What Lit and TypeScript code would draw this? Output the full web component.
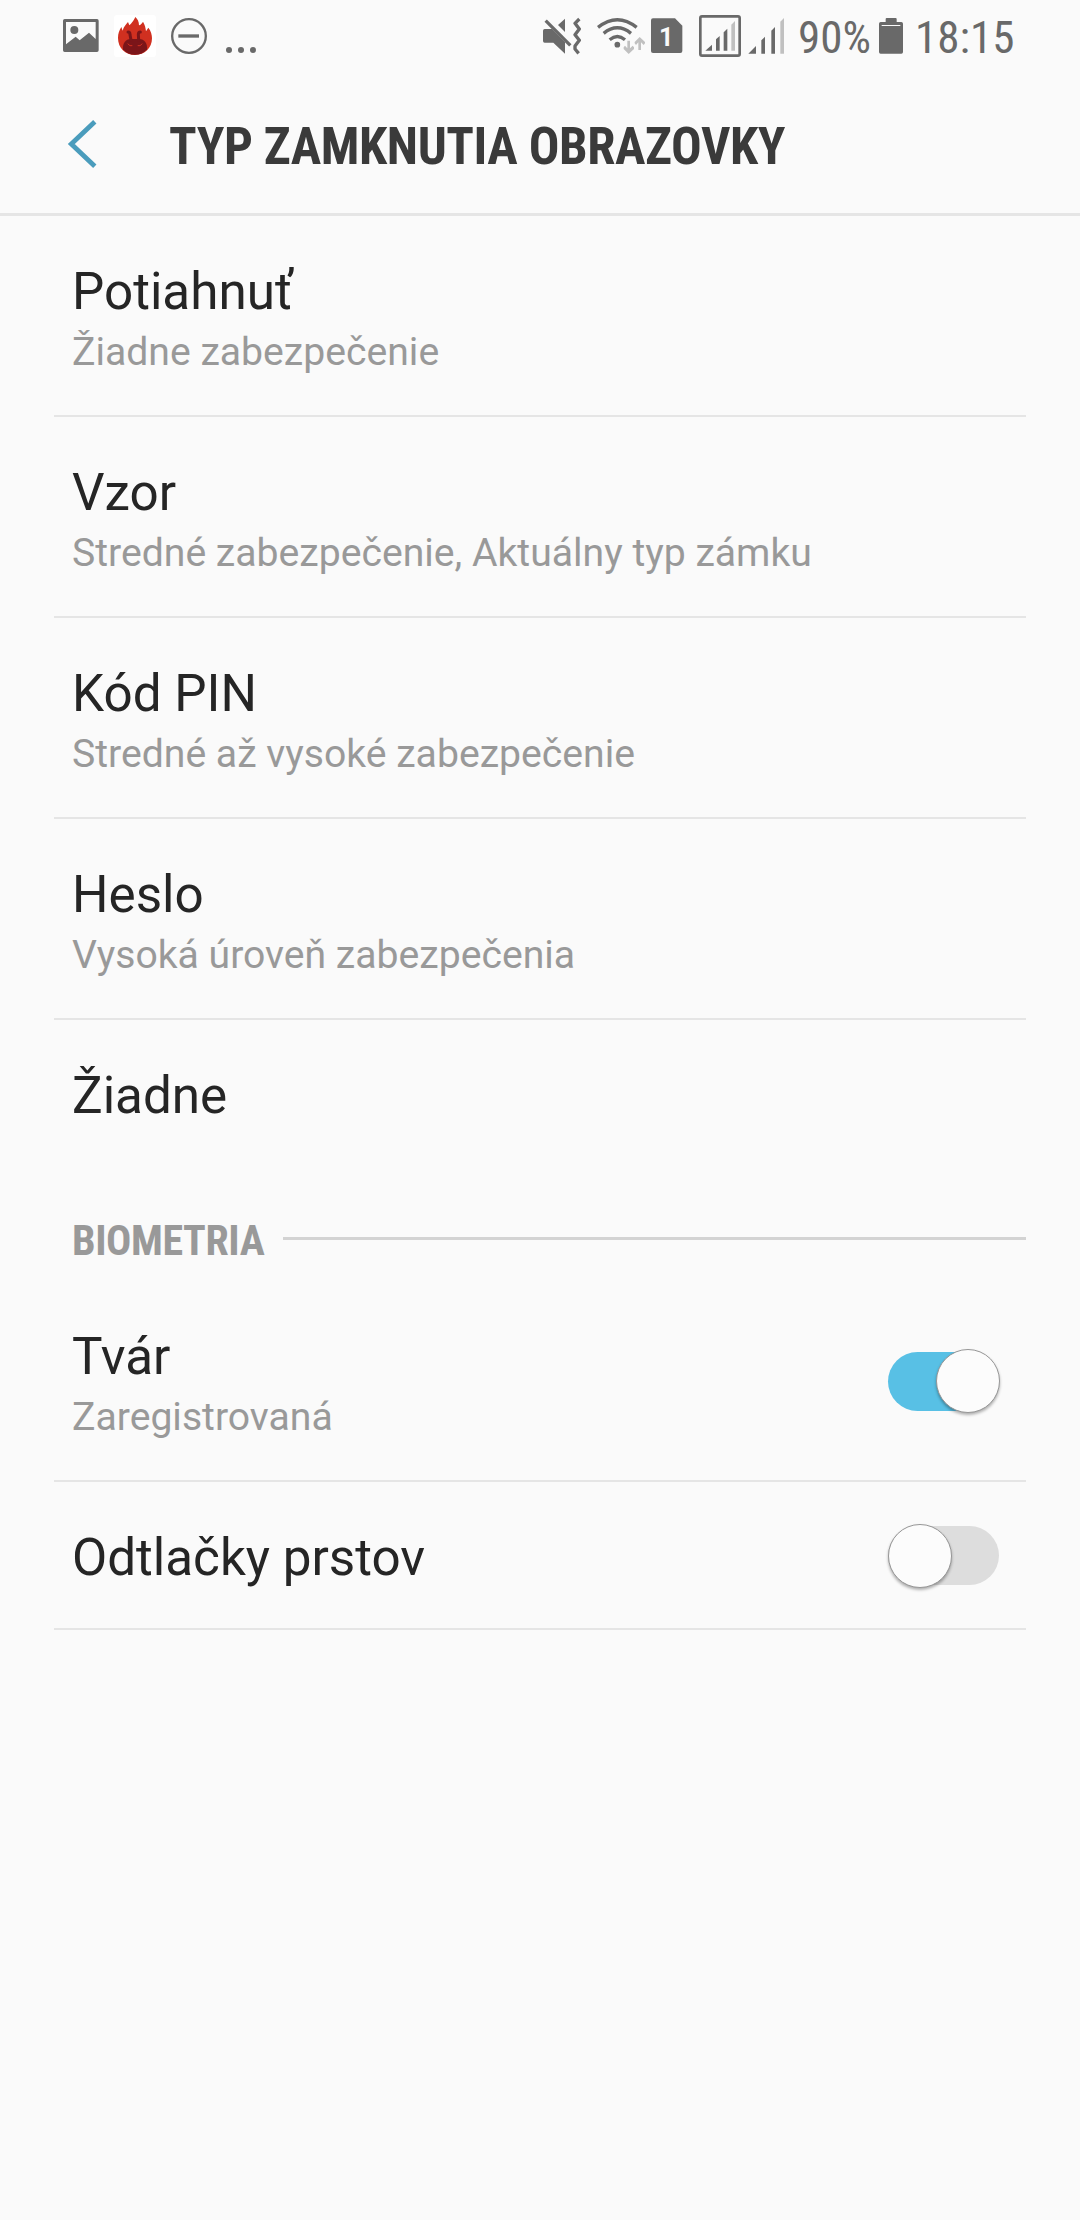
import { LitElement, html, css, svg, nothing } from "lit";
import { customElement, property } from "lit/decorators.js";

interface LockOption {
  title: string;
  summary?: string;
}

const LOCK_OPTIONS: LockOption[] = [
  { title: "Potiahnuť", summary: "Žiadne zabezpečenie" },
  { title: "Vzor", summary: "Stredné zabezpečenie, Aktuálny typ zámku" },
  { title: "Kód PIN", summary: "Stredné až vysoké zabezpečenie" },
  { title: "Heslo", summary: "Vysoká úroveň zabezpečenia" },
  { title: "Žiadne" },
];

@customElement("status-bar")
export class StatusBar extends LitElement {
  static styles = css`
    :host {
      display: flex;
      justify-content: space-between;
      height: 72px;
      padding: 0 66px 0 63px;
      color: #696969;
      font-family: "Roboto Condensed", Roboto, "Liberation Sans", sans-serif;
      font-stretch: 75%;
      font-size: 45px;
      line-height: 72px;
    }
    .group {
      display: flex;
    }
    svg {
      display: block;
      flex: none;
      height: 72px;
      fill: currentColor;
    }
    .line {
      fill: none;
      stroke: currentColor;
    }
    .faint {
      fill: #c0c0c0;
    }
    .light {
      fill: #fafafa;
    }
    .picture { width: 36px; margin-right: 15px; }
    .flame { width: 42px; margin-right: 15px; }
    .dnd { width: 36px; margin-right: 19px; }
    .more { width: 30px; }
    .mute { width: 38px; margin-right: 16px; }
    .wifi { width: 48px; margin-right: 6px; }
    .sim { width: 32px; margin-right: 16px; }
    .boxed { width: 42px; margin-right: 7px; }
    .signal { width: 36px; margin-right: 14px; }
    .battery { width: 24px; margin-right: 12px; }
    .sim-digit {
      font: 700 76px Roboto, sans-serif;
      fill: #fafafa;
    }
    .percent {
      width: 81px;
      padding-top: 2px;
    }
    .clock {
      width: 99px;
      padding-top: 2px;
      white-space: nowrap;
    }
  `;

  render() {
    return html`
      <div class="group">
        <svg class="picture" viewBox="39 0 108 216">
          <path fill-rule="evenodd" d="M44 57H141q5 0 5 5V151q0 5-5 5H44q-5 0-5-5V62q0-5 5-5ZM48 66V133L77 110L89 121L117 98L137 117V66Z" />
          <circle cx="73" cy="90" r="12" />
        </svg>
        <svg class="flame" viewBox="192 0 126 216">
          <rect x="192" y="45" width="126" height="126" rx="10" fill="#fff" />
          <path fill="#d03020" d="M255 165C226 165 204 144 204 114C204 100 208 91 214 81L218 92C221 80 227 75 234 66L238 76C242 72 249 66 256 51C263 57 267 65 267 76C272 75 276 70 279 65C285 75 287 84 288 94L295 83C303 93 306 104 306 115C306 144 284 165 255 165Z" />
          <path fill="#7b1519" d="M219 148C217 130 227 117 242 117H268C283 117 293 130 291 148C273 170 237 170 219 148Z" />
          <path fill="none" stroke="#7b1519" stroke-width="9" stroke-linecap="round" stroke-linejoin="round" d="M234 96Q240 96 240 104L243 120M271 96Q265 96 265 104L266 120" />
          <path fill="none" stroke="#d03020" stroke-width="3" d="M233 131L240 137H247M277 131L270 137H263" />
        </svg>
        <svg class="dnd" viewBox="363 0 108 216">
          <circle class="line" cx="417" cy="108" r="50.5" stroke-width="7" />
          <rect x="385" y="103" width="62" height="10" />
        </svg>
        <svg class="more" viewBox="528 0 90 216">
          <circle cx="537" cy="150" r="9" />
          <circle cx="573" cy="150" r="9" />
          <circle cx="609" cy="150" r="9" />
        </svg>
      </div>
      <div class="group">
        <svg class="mute" viewBox="39 0 114 216">
          <path d="M39 92Q39 87 44 87H66L105 126V161L70 128H44Q39 128 39 123Z" />
          <path d="M84 75L105 56V96Z" />
          <path class="line" stroke-width="10" d="M47 62L121 136" />
          <path class="line" stroke-width="10" stroke-linejoin="round" d="M148 57L135 70L148 87L135 104L148 121L135 138V147L146 160" />
        </svg>
        <svg class="wifi" viewBox="201 0 144 216">
          <circle cx="262" cy="134" r="8.5" />
          <path class="line" stroke-width="10" d="M239 119Q262 100 285 119M221 100Q262 67 303 100M204 82Q262 36 320 82" />
          <path class="faint" d="M292 122H300V145L308 137L312 142V147L296 162L281 147V142L285 137L292 145ZM325 150H333V127L341 135L345 130V126L329 111L314 126V130L318 135L325 127Z" />
        </svg>
        <svg class="sim" viewBox="365 0 96 216">
          <path d="M371 55H437L459 77V153Q459 159 453 159H371Q365 159 365 153V61Q365 55 371 55Z" />
          <text class="sim-digit" x="389" y="138">1</text>
        </svg>
        <svg class="boxed" viewBox="507 0 126 216">
          <rect class="line" x="511" y="49" width="118" height="118" rx="5" stroke-width="8" />
          ${this.bars([[526, 546, 152, 134], [558, 569, 118, 108], [581, 592, 97, 86]], [604, 615, 74, 63], 152)}
        </svg>
        <svg class="signal" viewBox="654 0 108 216">
          ${this.bars([[655, 678, 161, 138], [694, 705, 121, 110], [724, 735, 92, 81]], [751, 762, 65, 54], 161)}
        </svg>
        <span class="percent">90%</span>
        <svg class="battery" viewBox="297 0 72 216">
          <path d="M317 66V57Q317 54 320 54H347Q350 54 350 57V66H364Q369 66 369 71V156Q369 161 364 161H302Q297 161 297 156V71Q297 66 302 66Z" />
          <rect class="light" x="305" y="75" width="56" height="3" />
        </svg>
        <span class="clock">18:15</span>
      </div>
    `;
  }

  private bars(solid: number[][], faint: number[], base: number) {
    const d = ([l, r, tl, tr]: number[]) => `M${l} ${base}V${tl}L${r} ${tr}V${base}Z`;
    return svg`${solid.map((b) => svg`<path d=${d(b)} />`)}<path class="faint" d=${d(faint)} />`;
  }
}

@customElement("toggle-switch")
export class ToggleSwitch extends LitElement {
  @property({ type: Boolean, reflect: true }) on = false;

  static styles = css`
    :host {
      display: flex;
      align-items: center;
      flex: none;
      box-sizing: border-box;
      width: 111px;
      height: 59px;
      margin-top: 1px;
      border-radius: 30px;
      background: #dddddd;
    }
    :host([on]) {
      justify-content: flex-end;
      background: #58c0e5;
    }
    .knob {
      box-sizing: border-box;
      flex: none;
      width: 64px;
      height: 64px;
      margin-right: -1px;
      border: 1px solid #979797;
      border-radius: 50%;
      background: #fcfcfc;
      box-shadow: 0 2px 3px rgba(0, 0, 0, 0.3);
    }
  `;

  render() {
    return html`<div class="knob"></div>`;
  }
}

@customElement("setting-row")
export class SettingRow extends LitElement {
  @property() heading = "";
  @property() summary = "";

  static styles = css`
    :host {
      display: flex;
      align-items: center;
      justify-content: space-between;
      margin: 0 54px;
      padding: 0 27px 0 18px;
      border-bottom: 2px solid #e5e5e5;
    }
    :host(.last) {
      border-bottom: none;
    }
    .text {
      padding: 45px 0 40px;
      white-space: nowrap;
    }
    .title {
      font-size: 51.2px;
      line-height: 61px;
      color: #252525;
    }
    .summary {
      margin: 7px 0 -1px;
      font-size: 39.15px;
      line-height: 47px;
      color: #999999;
    }
  `;

  render() {
    return html`
      <div class="text">
        <div class="title">${this.heading}</div>
        ${this.summary ? html`<div class="summary">${this.summary}</div>` : nothing}
      </div>
      <slot></slot>
    `;
  }
}

@customElement("app-root")
export class AppRoot extends LitElement {
  static styles = css`
    :host {
      display: flex;
      flex-direction: column;
      width: 1080px;
      height: 2220px;
      overflow: hidden;
      background: #fafafa;
      font-family: Roboto, "Liberation Sans", sans-serif;
    }
    .header {
      display: flex;
      align-items: center;
      box-sizing: border-box;
      height: 144px;
      padding: 3px 0 0 67px;
      border-bottom: 3px solid #e5e5e5;
    }
    .back {
      width: 30px;
      height: 50px;
      margin-right: 72px;
      fill: none;
      stroke: #4a9cbc;
      stroke-width: 4.8;
    }
    .title {
      margin: 0;
      padding-top: 5px;
      font: 700 51px/61px "Roboto Condensed", Roboto, sans-serif;
      font-stretch: 75%;
      letter-spacing: -0.42px;
      color: #3a3a3a;
      white-space: nowrap;
    }
    .section {
      display: flex;
      align-items: center;
      gap: 19px;
      height: 115px;
      margin: 0 54px;
      padding-left: 18px;
    }
    .label {
      margin-top: 30px;
      padding-top: 4px;
      font: 700 42px/49px "Roboto Condensed", Roboto, sans-serif;
      font-stretch: 75%;
      letter-spacing: -0.4px;
      color: #999999;
    }
    .rule {
      flex: 1;
      height: 3px;
      margin-top: 30px;
      background: #d3d3d3;
    }
  `;

  render() {
    const last = LOCK_OPTIONS.length - 1;
    return html`
      <status-bar></status-bar>
      <div class="header">
        <svg class="back" viewBox="67 119 30 50"><path d="M94.8 121.7L71.3 144L94.8 166.3" /></svg>
        <h1 class="title">TYP ZAMKNUTIA OBRAZOVKY</h1>
      </div>
      ${LOCK_OPTIONS.map(
        (o, i) => html`<setting-row
          class=${i === last ? "last" : ""}
          .heading=${o.title}
          .summary=${o.summary ?? ""}
        ></setting-row>`
      )}
      <div class="section">
        <span class="label">BIOMETRIA</span>
        <span class="rule"></span>
      </div>
      <setting-row .heading=${"Tvár"} .summary=${"Zaregistrovaná"}><toggle-switch on></toggle-switch></setting-row>
      <setting-row .heading=${"Odtlačky prstov"}><toggle-switch></toggle-switch></setting-row>
    `;
  }
}
